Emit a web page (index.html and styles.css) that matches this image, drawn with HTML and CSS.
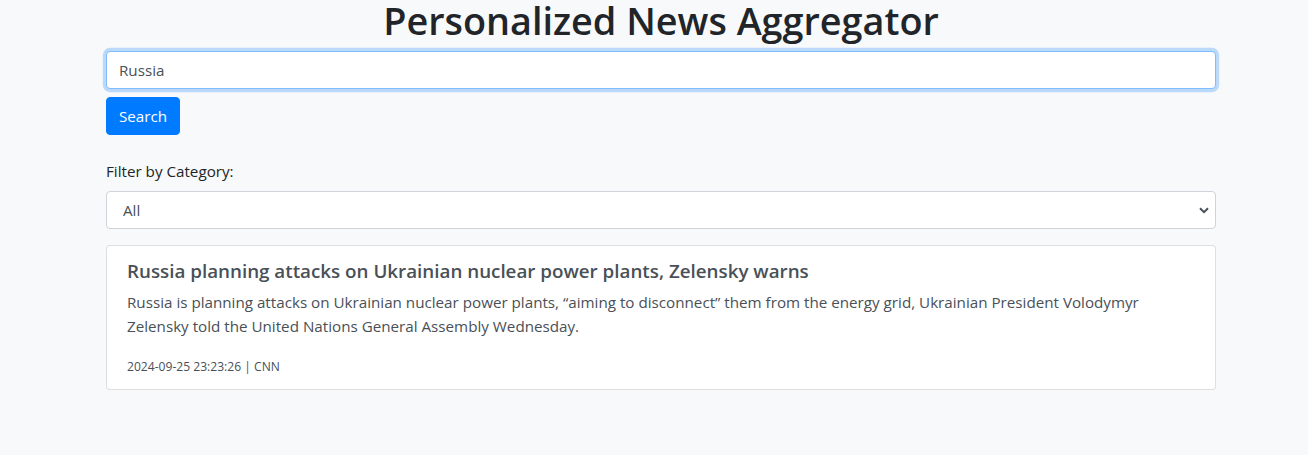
FILE: index.html
```html
<!DOCTYPE html>
<html lang="en">
<head>
<meta charset="utf-8">
<title>Personalized News Aggregator</title>
<link rel="stylesheet" href="styles.css">
</head>
<body>
<div class="container">
  <h1 class="title">Personalized News Aggregator</h1>
  <input class="search-input" type="text" value="Russia">
  <button class="btn-search" type="button">Search</button>
  <label class="filter-label">Filter by Category:</label>
  <div class="select-wrap">
    <div class="select-box">
      <span>All</span>
      <svg class="chevron" width="10" height="7" viewBox="0 0 10 7"><path d="M1 1.2 L5 5.2 L9 1.2" fill="none" stroke="#495057" stroke-width="2"/></svg>
    </div>
  </div>
  <div class="card">
    <h5 class="card-title">Russia planning attacks on Ukrainian nuclear power plants, Zelensky warns</h5>
    <p class="card-text">Russia is planning attacks on Ukrainian nuclear power plants, “aiming to disconnect” them from the energy grid, Ukrainian President Volodymyr Zelensky told the United Nations General Assembly Wednesday.</p>
    <p class="card-meta">2024-09-25 23:23:26 | CNN</p>
  </div>
</div>
</body>
</html>
```
FILE: styles.css
```css
* { box-sizing: border-box; }
html, body { margin: 0; padding: 0; }
body {
  background: #f8f9fa;
  font-family: "Open Sans", "Noto Sans", sans-serif;
  color: #212529;
  font-size: 15.2px;
  line-height: 1.5;
}
.container {
  width: 1110px;
  margin-left: 106px;
  display: flex;
  flex-direction: column;
  align-items: flex-start;
}
.title {
  align-self: stretch;
  text-align: center;
  font-size: 37.8px;
  font-weight: 600;
  line-height: 42px;
  margin: 0 0 9px;
  color: #212529;
}
.search-input {
  width: 100%;
  height: 38px;
  padding: 6px 12px;
  font: inherit;
  color: #495057;
  background: #fff;
  border: 1px solid #80bdff;
  border-radius: 4px;
  box-shadow: 0 0 0 3.2px rgba(0,123,255,.25);
  outline: none;
}
.btn-search {
  margin-top: 8px;
  height: 38px;
  padding: 6px 12px;
  font: inherit;
  color: #fff;
  background: #007bff;
  border: 1px solid #007bff;
  border-radius: 4px;
}
.filter-label {
  margin-top: 24px;
  margin-bottom: 8px;
  line-height: 24px;
  color: #212529;
}
.select-wrap { width: 100%; }
.select-box {
  height: 38px;
  padding: 6px 6px 6px 16px;
  color: #495057;
  background: #fff;
  border: 1px solid #ced4da;
  border-radius: 4px;
  display: flex;
  align-items: center;
  justify-content: space-between;
}
.card {
  width: 100%;
  margin-top: 16px;
  background: #fff;
  border: 1px solid rgba(0,0,0,.125);
  border-radius: 4px;
  padding: 13px 20px 13px;
  color: #495057;
}
.card-title {
  margin: 0 0 7px;
  font-size: 18.8px;
  font-weight: 600;
  line-height: 24px;
  color: #495057;
}
.card-text {
  margin: 0 0 19px;
  line-height: 24px;
}
.card-meta {
  margin: 0;
  font-size: 12.1px;
  line-height: 19px;
  color: #495057;
}
```
